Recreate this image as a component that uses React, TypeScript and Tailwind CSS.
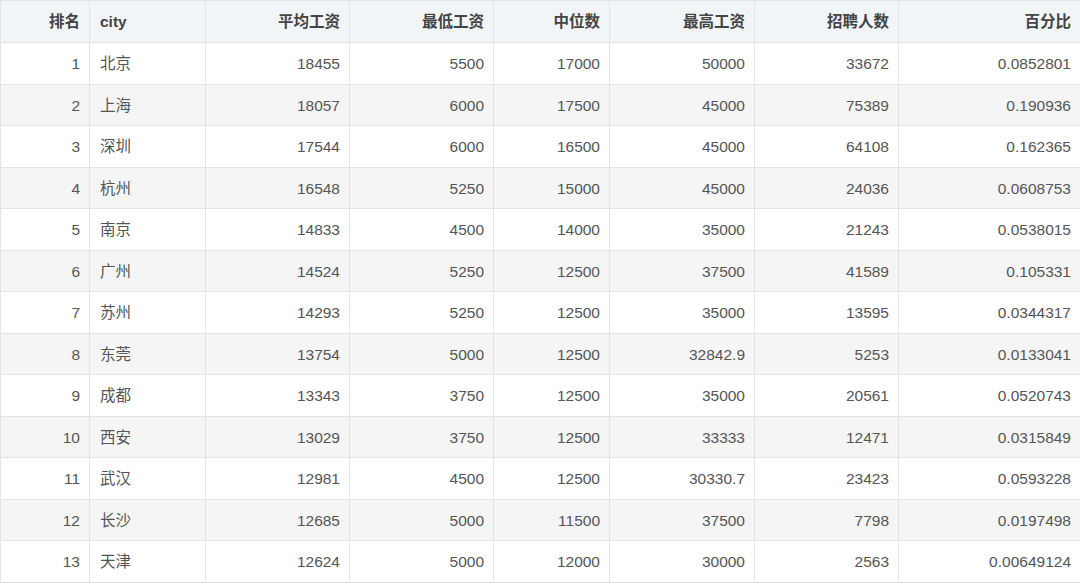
import React from "react";

const columns = [
  { key: "rank", label: "排名", width: 89, align: "right" },
  { key: "city", label: "city", width: 116, align: "left" },
  { key: "avg", label: "平均工资", width: 144, align: "right" },
  { key: "min", label: "最低工资", width: 144, align: "right" },
  { key: "median", label: "中位数", width: 116, align: "right" },
  { key: "max", label: "最高工资", width: 145, align: "right" },
  { key: "count", label: "招聘人数", width: 144, align: "right" },
  { key: "pct", label: "百分比", width: 182, align: "right" },
];

const rows: string[][] = [
  ["1", "北京", "18455", "5500", "17000", "50000", "33672", "0.0852801"],
  ["2", "上海", "18057", "6000", "17500", "45000", "75389", "0.190936"],
  ["3", "深圳", "17544", "6000", "16500", "45000", "64108", "0.162365"],
  ["4", "杭州", "16548", "5250", "15000", "45000", "24036", "0.0608753"],
  ["5", "南京", "14833", "4500", "14000", "35000", "21243", "0.0538015"],
  ["6", "广州", "14524", "5250", "12500", "37500", "41589", "0.105331"],
  ["7", "苏州", "14293", "5250", "12500", "35000", "13595", "0.0344317"],
  ["8", "东莞", "13754", "5000", "12500", "32842.9", "5253", "0.0133041"],
  ["9", "成都", "13343", "3750", "12500", "35000", "20561", "0.0520743"],
  ["10", "西安", "13029", "3750", "12500", "33333", "12471", "0.0315849"],
  ["11", "武汉", "12981", "4500", "12500", "30330.7", "23423", "0.0593228"],
  ["12", "长沙", "12685", "5000", "11500", "37500", "7798", "0.0197498"],
  ["13", "天津", "12624", "5000", "12000", "30000", "2563", "0.00649124"],
];

export default function App() {
  return (
    <div
      className="w-[1080px] h-[584px] overflow-hidden bg-white"
      style={{ fontFamily: '"Liberation Sans", Arial, "Noto Sans CJK SC", sans-serif' }}
    >
      <table className="table-fixed border-collapse w-[1080px] text-[15.5px] text-[#555]">
        <colgroup>
          {columns.map((c) => (
            <col key={c.key} style={{ width: c.width }} />
          ))}
        </colgroup>
        <thead>
          <tr className="h-[42px] bg-[#f2f5f7]">
            {columns.map((c) => (
              <th
                key={c.key}
                className={`border border-[#e3e6e8] pl-[10px] pr-[9px] pt-[1px] font-bold text-[#444] ${
                  c.align === "left" ? "text-left" : "text-right"
                }`}
              >
                {c.label}
              </th>
            ))}
          </tr>
        </thead>
        <tbody>
          {rows.map((r, i) => (
            <tr key={r[0]} className={`h-[41.5px] ${i % 2 === 1 ? "bg-[#f5f5f5]" : "bg-white"}`}>
              {r.map((v, j) => (
                <td
                  key={j}
                  className={`border border-[#e3e3e3] pl-[10px] pr-[9px] pt-[1px] ${
                    j === 1 ? "text-left" : "text-right"
                  }`}
                >
                  {v}
                </td>
              ))}
            </tr>
          ))}
        </tbody>
      </table>
    </div>
  );
}
